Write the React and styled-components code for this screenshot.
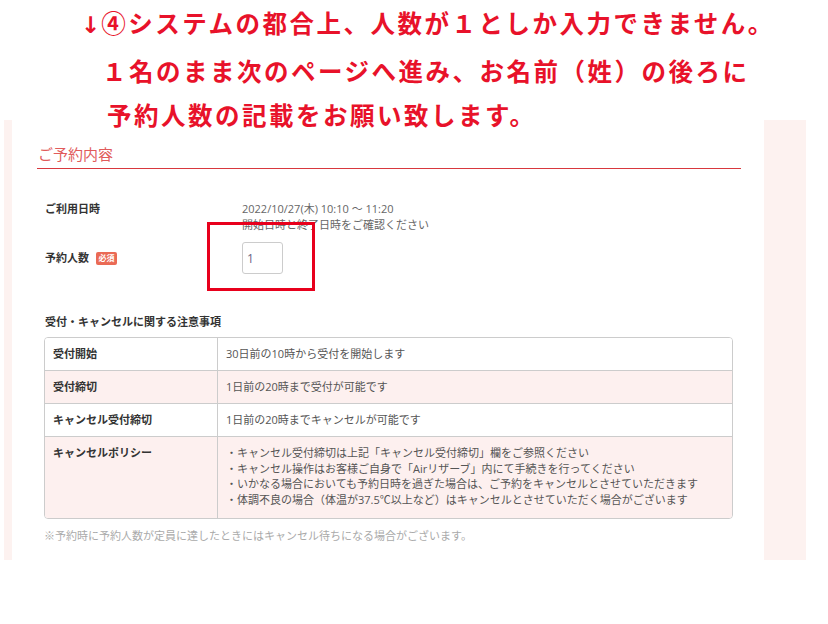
import React from "react";
import styled, { createGlobalStyle } from "styled-components";

const GlobalStyle = createGlobalStyle`
  html, body {
    margin: 0;
    padding: 0;
    background: #ffffff;
  }
  body {
    font-family: "Open Sans", "Noto Sans CJK JP", sans-serif;
    color: #333333;
  }
`;

const policies = [
  "・キャンセル受付締切は上記「キャンセル受付締切」欄をご参照ください",
  "・キャンセル操作はお客様ご自身で「Airリザーブ」内にて手続きを行ってください",
  "・いかなる場合においても予約日時を過ぎた場合は、ご予約をキャンセルとさせていただきます",
  "・体調不良の場合（体温が37.5℃以上など）はキャンセルとさせていただく場合がございます",
];

const rules = [
  { label: "受付開始", value: "30日前の10時から受付を開始します" },
  { label: "受付締切", value: "1日前の20時まで受付が可能です" },
  { label: "キャンセル受付締切", value: "1日前の20時までキャンセルが可能です" },
];

const App = () => {
  return (
    <>
      <GlobalStyle />
      <Notice>
        <NoticeLine $indent={81}>
          <Arrow>↓</Arrow>④システムの都合上、人数が１としか入力できません。
        </NoticeLine>
        <NoticeLine $indent={102} $gap={4}>
          １名のまま次のページへ進み、お名前（姓）の後ろに
        </NoticeLine>
        <NoticeLine $indent={107}>予約人数の記載をお願い致します。</NoticeLine>
      </Notice>

      <Frame>
        <Panel>
          <SectionTitle>ご予約内容</SectionTitle>

          <InfoList>
            <InfoLabel>ご利用日時</InfoLabel>
            <InfoValue>
              2022/10/27(木) 10:10 ～ 11:20
              <br />
              開始日時と終了日時をご確認ください
            </InfoValue>

            <InfoLabel $center>
              予約人数
              <Required>必須</Required>
            </InfoLabel>
            <InfoValue>
              <InputWrap>
                <CountInput type="text" defaultValue="1" readOnly />
                <Highlight />
              </InputWrap>
            </InfoValue>
          </InfoList>

          <SubTitle>受付・キャンセルに関する注意事項</SubTitle>

          <RuleTable>
            {rules.map((r, i) => (
              <RuleRow key={r.label} $pink={i % 2 === 1}>
                <RuleHead>{r.label}</RuleHead>
                <RuleCell>{r.value}</RuleCell>
              </RuleRow>
            ))}
            <RuleRow $pink $last>
              <RuleHead>キャンセルポリシー</RuleHead>
              <RuleCell $tall>
                {policies.map((p) => (
                  <div key={p}>{p}</div>
                ))}
              </RuleCell>
            </RuleRow>
          </RuleTable>

          <Footnote>
            ※予約時に予約人数が定員に達したときにはキャンセル待ちになる場合がございます。
          </Footnote>
        </Panel>
      </Frame>
    </>
  );
};

const Notice = styled.div`
  height: 120px;
  padding-top: 1px;
  box-sizing: border-box;
  font-family: "Noto Sans CJK JP", sans-serif;
  font-weight: 700;
  font-size: 24.5px;
  letter-spacing: 2.5px;
  color: #e8122a;
`;

const NoticeLine = styled.div`
  line-height: 44px;
  height: 44px;
  white-space: nowrap;
  padding-left: ${(p) => p.$indent}px;
  margin-top: ${(p) => p.$gap || 0}px;
`;

const Arrow = styled.span`
  font-family: "DejaVu Sans", sans-serif;
  font-size: 23px;
  letter-spacing: 1px;
`;

const Frame = styled.div`
  margin-left: 4px;
  width: 802px;
  height: 440px;
  box-sizing: border-box;
  padding: 0 42px 0 8px;
  background: #fdf2f0;
`;

const Panel = styled.div`
  height: 100%;
  background: #ffffff;
  padding: 23px 23px 0 25px;
  box-sizing: border-box;
`;

const SectionTitle = styled.h2`
  margin: 0;
  padding: 0 0 3px 1px;
  font-size: 15px;
  line-height: 22px;
  font-weight: 400;
  color: #e15b5b;
  border-bottom: 1px solid #d8383e;
`;

const InfoList = styled.div`
  display: grid;
  grid-template-columns: 197px 1fr;
  row-gap: 9px;
  padding-left: 8px;
  margin-top: 32px;
  font-size: 11px;
  line-height: 16px;
`;

const InfoLabel = styled.div`
  font-weight: 700;
  color: #333333;
  display: flex;
  align-items: ${(p) => (p.$center ? "center" : "flex-start")};
`;

const InfoValue = styled.div`
  color: #666666;
`;

const Required = styled.span`
  display: inline-flex;
  align-items: center;
  justify-content: center;
  margin-left: 7px;
  width: 21px;
  height: 13px;
  border-radius: 2px;
  background: #ea6a55;
  color: #ffffff;
  font-size: 8px;
  font-weight: 700;
  line-height: 1;
`;

const InputWrap = styled.div`
  position: relative;
  width: 41px;
  height: 32px;
`;

const CountInput = styled.input`
  width: 41px;
  height: 32px;
  box-sizing: border-box;
  border: 1px solid #cccccc;
  border-radius: 3px;
  padding: 0 0 0 4px;
  font-family: "Open Sans", sans-serif;
  font-size: 12px;
  color: #6b6585;
  background: #ffffff;
  outline: none;
`;

const Highlight = styled.div`
  position: absolute;
  left: -35px;
  top: -20px;
  width: 108px;
  height: 69px;
  box-sizing: border-box;
  border: 3px solid #e8001c;
  pointer-events: none;
`;

const SubTitle = styled.h3`
  margin: 40px 0 0 8px;
  font-size: 11px;
  line-height: 16px;
  font-weight: 700;
  color: #333333;
`;

const RuleTable = styled.div`
  margin: 7px 8px 0 7px;
  border: 1px solid #cccccc;
  border-radius: 4px;
  overflow: hidden;
  font-size: 11px;
  line-height: 16px;
`;

const RuleRow = styled.div`
  display: grid;
  grid-template-columns: 173px 1fr;
  background: ${(p) => (p.$pink ? "#fdf0ef" : "#ffffff")};
  border-bottom: ${(p) => (p.$last ? "none" : "1px solid #cccccc")};
`;

const RuleHead = styled.div`
  padding: 8px 8px;
  font-weight: 700;
  color: #333333;
  border-right: 1px solid #cccccc;
`;

const RuleCell = styled.div`
  padding: ${(p) => (p.$tall ? "8px 8px 10px" : "8px 8px")};
  color: #555555;
  line-height: ${(p) => (p.$tall ? "15.7px" : "16px")};
  white-space: nowrap;
`;

const Footnote = styled.p`
  margin: 9px 0 0 7px;
  font-size: 11px;
  line-height: 16px;
  color: #aaaaaa;
`;

export default App;
